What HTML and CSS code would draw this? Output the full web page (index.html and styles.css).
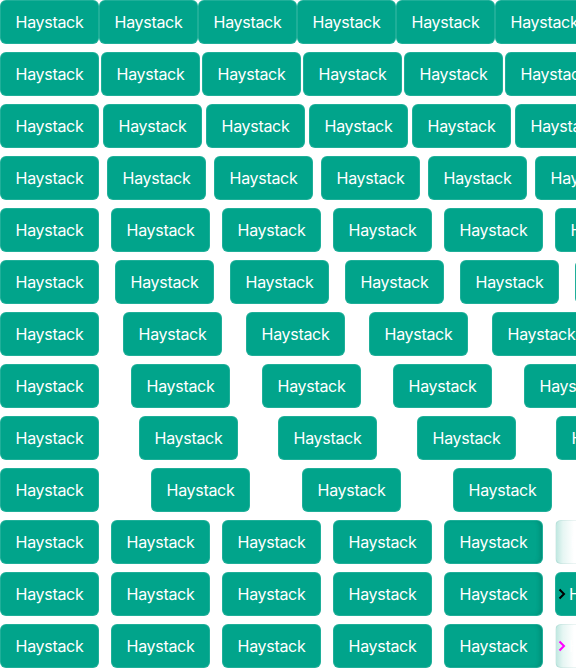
FILE: index.html
```html
<!DOCTYPE html>
<html>
<head>
<meta charset="utf-8">
<link rel="stylesheet" href="styles.css">
</head>
<body>
<div class="stack">
  <div class="row g0"><button class="btn">Haystack</button><button class="btn">Haystack</button><button class="btn">Haystack</button><button class="btn">Haystack</button><button class="btn">Haystack</button><button class="btn">Haystack</button></div>
  <div class="row g2"><button class="btn">Haystack</button><button class="btn">Haystack</button><button class="btn">Haystack</button><button class="btn">Haystack</button><button class="btn">Haystack</button><button class="btn">Haystack</button></div>
  <div class="row g4"><button class="btn">Haystack</button><button class="btn">Haystack</button><button class="btn">Haystack</button><button class="btn">Haystack</button><button class="btn">Haystack</button><button class="btn">Haystack</button></div>
  <div class="row g8"><button class="btn">Haystack</button><button class="btn">Haystack</button><button class="btn">Haystack</button><button class="btn">Haystack</button><button class="btn">Haystack</button><button class="btn">Haystack</button></div>
  <div class="row g12"><button class="btn">Haystack</button><button class="btn">Haystack</button><button class="btn">Haystack</button><button class="btn">Haystack</button><button class="btn">Haystack</button><button class="btn">Haystack</button></div>
  <div class="row g16"><button class="btn">Haystack</button><button class="btn">Haystack</button><button class="btn">Haystack</button><button class="btn">Haystack</button><button class="btn">Haystack</button><button class="btn">Haystack</button></div>
  <div class="row g24"><button class="btn">Haystack</button><button class="btn">Haystack</button><button class="btn">Haystack</button><button class="btn">Haystack</button><button class="btn">Haystack</button></div>
  <div class="row g32"><button class="btn">Haystack</button><button class="btn">Haystack</button><button class="btn">Haystack</button><button class="btn">Haystack</button><button class="btn">Haystack</button></div>
  <div class="row g40"><button class="btn">Haystack</button><button class="btn">Haystack</button><button class="btn">Haystack</button><button class="btn">Haystack</button><button class="btn">Haystack</button></div>
  <div class="row g52"><button class="btn">Haystack</button><button class="btn">Haystack</button><button class="btn">Haystack</button><button class="btn">Haystack</button></div>
  <div class="row g12"><button class="btn">Haystack</button><button class="btn">Haystack</button><button class="btn">Haystack</button><button class="btn">Haystack</button><button class="btn edge">Haystack</button><button class="btn fade">Haystack</button></div>
  <div class="row g12"><button class="btn">Haystack</button><button class="btn">Haystack</button><button class="btn">Haystack</button><button class="btn">Haystack</button><button class="btn edge">Haystack</button><button class="btn chev"><svg class="ico" width="8" height="12" viewBox="0 0 8 12"><path d="M1.5 1.5 L6 6 L1.5 10.5" fill="none" stroke="#000" stroke-width="2"/></svg>Haystack</button></div>
  <div class="row g12"><button class="btn">Haystack</button><button class="btn">Haystack</button><button class="btn">Haystack</button><button class="btn">Haystack</button><button class="btn edge">Haystack</button><button class="btn fade chev"><svg class="ico" width="8" height="12" viewBox="0 0 8 12"><path d="M1.5 1.5 L6 6 L1.5 10.5" fill="none" stroke="#ff00ff" stroke-width="2"/></svg>Haystack</button></div>
</div>
</body>
</html>
```

FILE: styles.css
```css
html, body {
  margin: 0;
  padding: 0;
  background: #ffffff;
}
.stack {
  display: flex;
  flex-direction: column;
  gap: 8px;
  width: 576px;
  height: 668px;
  overflow: hidden;
}
.row {
  display: flex;
  flex-wrap: nowrap;
  overflow: hidden;
  flex: none;
}
.g0 { gap: 0; }
.g2 { gap: 2px; }
.g4 { gap: 4px; }
.g8 { gap: 8px; }
.g12 { gap: 12px; }
.g16 { gap: 16px; }
.g24 { gap: 24px; }
.g32 { gap: 32px; }
.g40 { gap: 40px; }
.g52 { gap: 52px; }
.btn {
  flex: none;
  box-sizing: border-box;
  width: 99px;
  height: 44px;
  margin: 0;
  padding: 0 16px;
  border: 1px solid rgba(255, 255, 255, 0.12);
  border-radius: 6px;
  background: #01a48b;
  color: #ffffff;
  font-family: Inter, "Noto Sans", sans-serif;
  font-size: 16px;
  font-weight: 400;
  letter-spacing: -0.3px;
  line-height: 24px;
  text-align: center;
  white-space: nowrap;
  display: flex;
  align-items: center;
  justify-content: center;
}
.edge {
  box-shadow: inset -4px 0 4px -2px rgba(0, 60, 50, 0.22);
}
.fade {
  background: linear-gradient(to right, #bfe7e0 0%, #e6f6f3 7px, #ffffff 18px);
  border: 1px solid rgba(0, 120, 100, 0.08);
}
.chev {
  justify-content: flex-start;
  padding-left: 2px;
  gap: 3px;
}
.ico {
  flex: none;
}
```
